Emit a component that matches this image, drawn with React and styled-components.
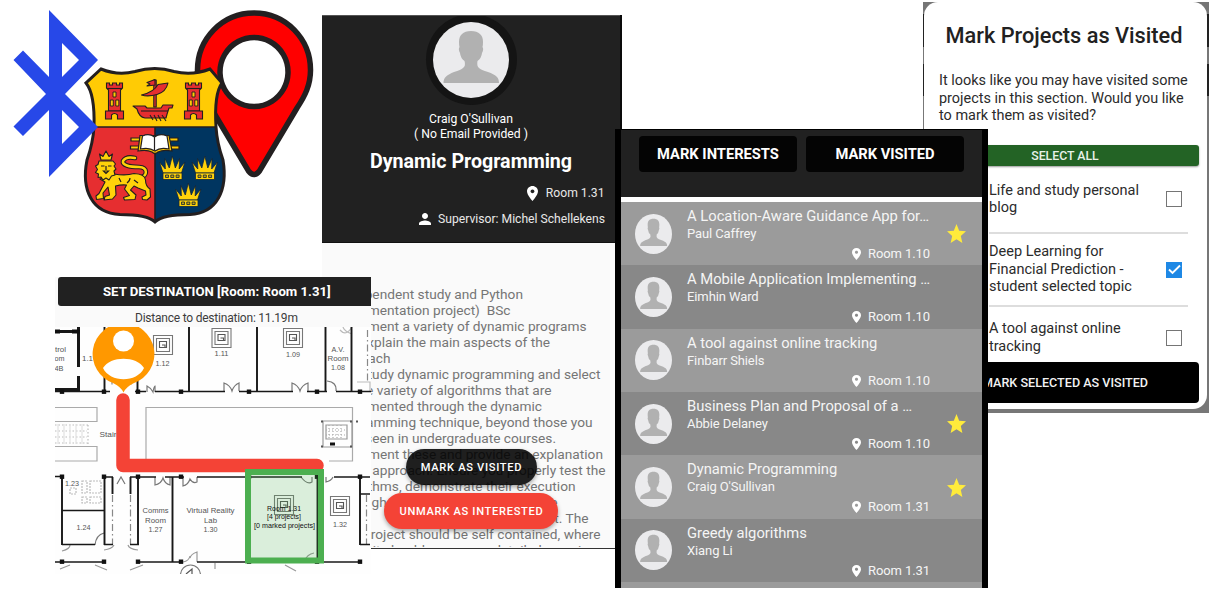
import React from "react";
import styled, { createGlobalStyle } from "styled-components";

const Global = createGlobalStyle`
  * { box-sizing: border-box; }
  body { margin: 0; background: #fff; font-family: Roboto, "Liberation Sans", sans-serif; }
`;

const Canvas = styled.main`
  position: relative;
  width: 1229px;
  height: 600px;
  overflow: hidden;
  background: #fff;
`;

const Screen = styled.section`
  position: absolute;
  left: ${(p) => p.$x}px;
  top: ${(p) => p.$y}px;
  width: ${(p) => p.$w}px;
  height: ${(p) => p.$h}px;
  overflow: hidden;
  display: flex;
  flex-direction: column;
`;

const TextLine = styled.span`
  display: block;
  white-space: pre;
`;

/* ---------- logo ---------- */

const Logo = styled.svg`
  position: absolute;
  left: 0;
  top: 0;
`;

const SHIELD =
  "M101 69 Q118 76 135 71.5 Q155 65.5 174 71.5 Q192 76 210 69 L222 83 Q214 94 216 127 Q217 143 223 160 C228 190 217 213 190 214.5 C172 214.5 160 217 155 222 C150 217 138 214.5 120 214.5 C92 213 81 190 87 160 Q93 143 94 127 Q95 94 86 83 Z";

const Tower = ({ x }) => (
  <g transform={`translate(${x} 82)`} fill="#e62e30" stroke="#231f20" strokeWidth="1.1">
    <path d="M1 1 h3 v2 h3 v-2 h4 v2 h3 v-2 h3 v5 l-2 2 v21 h-12 v-21 l-2 -2 z" />
    <path d="M0 29 h18 v8 h-6 v-4 q-3 -3 -6 0 v4 h-6 z" />
    <path d="M1.5 6.5 h15" />
    <g fill="#ffcb05" strokeWidth="0.9">
      <path d="M7.5 10 h3 v5 h-3 z M4.8 18 h3 v6 h-3 z M10.3 18 h3 v6 h-3 z" />
    </g>
  </g>
);

const Crown = ({ x, y }) => (
  <g transform={`translate(${x} ${y})`} fill="#ffd20a" stroke="#10233a" strokeWidth="0.8">
    <path d="M3.5 17 L0 6 L5.8 13 L5.5 2.5 L9.8 12 L12.8 0 L15.8 12 L20 2.5 L19.7 13 L25.5 6 L22 17 Z" />
    <path d="M3.5 17 h19 v6.5 h-19 z" />
    <path d="M6 19 h3 v2.5 h-3 z M11.3 19 h3 v2.5 h-3 z M16.6 19 h3 v2.5 h-3 z" fill="#c9a30c" />
  </g>
);

const TAIL = "M140 177.5 C148 176 148 167.500 139 167 C129 167 122 165 123 161 Q126 156 135 158";

const BrandLogo = () => (
  <Logo width="320" height="240" viewBox="0 0 320 240">
    <path
      d="M254 13 C286 13 310.5 39 310.5 70 C310.5 85 305 96 297 108 L259.5 171 Q254 178 248.5 171 L211 108 C203 96 197.5 85 197.5 70 C197.5 39 222 13 254 13 Z M254 37.5 a34 34.5 0 1 0 .01 0 Z"
      fill="#f00"
      fillRule="evenodd"
      stroke="#231f20"
      strokeWidth="5.5"
    />
    <clipPath id="shield"><path d={SHIELD} /></clipPath>
    <g clipPath="url(#shield)">
      <path d="M80 60 h150 v67 h-150 z" fill="#ffcb05" />
      <path d="M80 127 h75 v100 h-75 z" fill="#e62e30" />
      <path d="M155 127 h75 v100 h-75 z" fill="#003560" />
      <path d="M80 127 h150 M155 127 v97" stroke="#231f20" strokeWidth="1.6" fill="none" />
    </g>
    <path d={SHIELD} fill="none" stroke="#231f20" strokeWidth="3" strokeLinejoin="miter" />
    <Tower x={105.5} />
    <Tower x={184.5} />
    <g stroke="#231f20" strokeWidth="1.1" fill="#e62e30" strokeLinejoin="round">
      <path d="M153.8 80 h2.4 v27 h-2.4 z" />
      <path d="M155 79.5 l-8 3 l3 1.5 l-3 2 l8 -1 z" />
      <path d="M141.5 95 Q154 92 158 84.5 L168 83 Q166 92 157 94.5 Q148 97 141.500 95 Z" />
      <path d="M133 106 h12 l2 2 h14 l2 -3 h10 l-1 3 h-3 q-2 6 -3 10 h-21 q-6 -1 -8 -9 z" />
      <path d="M141 111 h27" fill="none" />
      <path d="M150 115 l3 5 M154 115 l3 6 M158 115 l3 6 M162 115 l4 6" fill="none" />
    </g>
    <g stroke="#231f20" strokeWidth="1.2">
      <path d="M131 138 h10 v3 h-10 z M130.5 146 h10 v3 h-10 z M169 138 h9 v3 h-9 z M170 146 h9 v3 h-9 z" fill="#ffcb05" />
      <path d="M140 135.5 L138 151 Q147 149.5 152 152 Q155 155 158 152 Q163 149.5 172 151 L169 135.5 Z" fill="#ffcb05" />
      <path d="M142.5 136 Q149 133 154.5 137 Q160 133 167 136 L169 149 Q160 147 155 151 Q149 147 140.5 149 Z" fill="#fff" />
      <path d="M154.5 137 V150" fill="none" />
    </g>
    <path d={TAIL} fill="none" stroke="#231f20" strokeWidth="4.6" strokeLinecap="round" />
    <path d={TAIL} fill="none" stroke="#ffd20a" strokeWidth="2.5" strokeLinecap="round" />
    <g fill="#ffd20a" stroke="#231f20" strokeWidth="1.1" strokeLinejoin="round">
      <path d="M114 174 Q126 176 134 173.500 Q145 174 145.500 180 Q145.500 186 150 189 L150.500 197 L147 200 L142.500 199.500 L142 197 L146 195 L145.500 191 L138 188 L134 186 L130.500 190 L136 195 L135 199.500 L124.500 200 L123.500 197.500 L129.500 195.500 L124.500 189 L126.500 185 Q121 184.500 115.500 186 L116 195 L112.500 199 L104 200 L105 196.500 L109.500 195 L108 187 L103 193 L103.500 198.500 L96.500 199.500 L96 196 L99 193.500 L105 182 L100 179 Z" />
      <path d="M99 161 L113 161 L115.500 164 L114 166 L116 169 L114 171 L115 175 L111.500 176 L109 180 L106 178 L103 180 L101 177 L98 177.500 L98.500 174 L95.500 172.500 L97.500 169.500 L95.500 166 L98 164.500 Z" />
      <path d="M101 160 L99.500 154 L103 156.500 L106 151 L109 156.500 L112.500 154 L111 160 Z" />
    </g>
    <path d="M101 166 h3.500 M108 166 h3.500 M103.500 171 h5 l-2.500 2.500 z M106 166 v4 M119 178 l2 4 M127 183 q3 -2 3 -5 M134 180 l4 3" fill="none" stroke="#231f20" strokeWidth="1.2" />
    <Crown x={159.5} y={156} />
    <Crown x={192} y={156} />
    <Crown x={175.5} y={183} />
    <path
      d="M49 10 L98 60 L65 94 L98 127 L49 177 V110 L23 136 L13.5 126.5 L46 94 L13.5 60 L23 50.5 L49 77 Z M62 43 V77 L79 60 Z M62 110 V144 L79 127 Z"
      fill="#2748e8"
      fillRule="evenodd"
    />
  </Logo>
);

/* ---------- shared glyphs ---------- */

const Glyph = styled.svg`
  display: block;
  flex: none;
`;

const Person = ({ w, h }) => (
  <Glyph width={w} height={h} viewBox="0 0 76 76" preserveAspectRatio="none">
    <circle cx="38" cy="38" r="38" fill="#ebebed" />
    <path
      d="M38 9 C46 9 50 13 50 20 Q50 23 49.5 25 Q51 27 49 31 Q48.5 36 44.5 39 Q43.5 44 46 46 Q48 48 55 50 C63 53 66 55 66 61 L10.5 61 C10.5 55 14 53 21 50 Q28 48 30 46 Q33 44 31.5 39 Q27.5 36 27 31 Q25 27 26.5 25 Q26 23 26 20 C26 13 30 9 38 9 Z"
      fill="#b1b1b1"
    />
  </Glyph>
);

const Pin = ({ w, h }) => (
  <Glyph width={w} height={h} viewBox="5 2 14 20" preserveAspectRatio="none">
    <path
      fill="#fff"
      d="M12 2C8.130 2 5 5.130 5 9c0 5.250 7 13 7 13s7-7.750 7-13c0-3.870-3.130-7-7-7zm0 9.500c-1.380 0-2.500-1.120-2.500-2.500s1.120-2.500 2.500-2.500 2.500 1.120 2.500 2.500-1.120 2.500-2.500 2.500z"
    />
  </Glyph>
);

/* ---------- project details ---------- */

const ProfileScreen = styled(Screen)`
  background: #fafafa;
  border-right: 2px solid #0a0a0a;
  border-bottom: 1px solid #333;
`;

const ProfileHeader = styled.header`
  height: 228px;
  flex: none;
  background: #212121;
  border-top: 1px solid #555;
  border-bottom: 1px solid #111;
  color: #fff;
  display: flex;
  flex-direction: column;
  align-items: center;
`;

const AvatarRing = styled.div`
  width: 91px;
  height: 91px;
  margin-top: -2px;
  border-radius: 50%;
  background: #141414;
  display: grid;
  place-items: center;
`;

const HeaderArea = styled.div`
  width: 100%;
  height: 93px;
  overflow: hidden;
  display: flex;
  justify-content: center;
`;

const Contact = styled.div`
  font-size: 12.2px;
  line-height: 15px;
  text-align: center;
  margin-top: 3px;
`;

const ProfileTitle = styled.h2`
  margin: 8px 0 0;
  font-size: 19.65px;
  line-height: 24px;
  font-weight: 700;
`;

const Meta = styled.div`
  align-self: flex-end;
  display: flex;
  align-items: center;
  gap: ${(p) => p.$gap}px;
  height: 26px;
  margin-top: ${(p) => p.$top || 0}px;
  padding-right: ${(p) => p.$right}px;
  font-size: 12.150px;
  color: #e8e8e8;
`;

const Description = styled.div`
  padding-top: 43px;
  height: 304px;
  overflow: hidden;
  font-size: 13.7px;
  line-height: 16px;
  color: #757575;
`;

const Line = styled.div`
  white-space: pre;
  text-align: right;
  padding-right: ${(p) => 620 - p.$end}px;
`;

const Actions = styled.div`
  position: absolute;
  left: 62px;
  top: 434px;
  display: flex;
  flex-direction: column;
  align-items: center;
  gap: 8px;
`;

const Pill = styled.button`
  width: ${(p) => p.$w}px;
  height: 36px;
  border: 0;
  border-radius: 18px;
  padding: 0 0 0 1px;
  background: ${(p) => p.$bg};
  color: #fff;
  font: 500 11.1px Roboto, sans-serif;
  letter-spacing: 0.7px;
  box-shadow: 0 2px 4px rgba(0, 0, 0, 0.35);
`;

const description = [
  ["pendent study and Python", 523],
  ["mentation project)  BSc", 510.5],
  ["ment a variety of dynamic programs", 586.5],
  ["xplain the main aspects of the", 550],
  ["ach", 390.5],
  ["tudy dynamic programming and select", 600.5],
  ["e variety of algorithms that are", 551.5],
  ["mented through the dynamic", 542],
  ["amming technique, beyond those you", 592.5],
  ["seen in undergraduate courses.", 556],
  ["ment these and provide an explanation", 603],
  ["approach. Ensure you properly test the", 605.5],
  ["thms, demonstrate their execution", 575.5],
  ["gh the results and evaluate the", 557.5],
  ["edge of the subject project. The", 588.5],
  ["project should be self contained, where", 600.5],
  ["it should serve as a detailed overview", 599],
];

const Profile = () => (
  <ProfileScreen $x={322} $y={15} $w={300} $h={534}>
    <ProfileHeader>
      <HeaderArea>
        <AvatarRing><Person w={76} h={76} /></AvatarRing>
      </HeaderArea>
      <Contact>
        <TextLine>Craig O'Sullivan</TextLine>
        <TextLine>( No Email Provided )</TextLine>
      </Contact>
      <ProfileTitle><TextLine>Dynamic Programming</TextLine></ProfileTitle>
      <Meta $gap={8} $right={15.5} $top={6}>
        <Pin w={11} h={15} />
        <TextLine>Room 1.31</TextLine>
      </Meta>
      <Meta $gap={7} $right={15}>
        <Glyph width="12" height="12" viewBox="4 4 16 16">
          <path fill="#fff" d="M12 12c2.210 0 4-1.790 4-4s-1.790-4-4-4-4 1.790-4 4 1.790 4 4 4zm0 2c-2.670 0-8 1.340-8 4v2h16v-2c0-2.660-5.330-4-8-4z" />
        </Glyph>
        <TextLine>Supervisor: Michel Schellekens</TextLine>
      </Meta>
    </ProfileHeader>
    <Description>
      {description.map(([text, end]) => <Line key={text} $end={end}>{text}</Line>)}
    </Description>
    <Actions>
      <Pill $w={131} $bg="rgba(0,0,0,0.88)">MARK AS VISITED</Pill>
      <Pill $w={174} $bg="#f44336">UNMARK AS INTERESTED</Pill>
    </Actions>
  </ProfileScreen>
);

/* ---------- map ---------- */

const MapScreen = styled(Screen)`
  background: #fafafa;
`;

const DestinationButton = styled.button`
  height: 29px;
  margin: 0 0 0 3px;
  padding: 0;
  border: 0;
  border-radius: 3px 0 0 3px;
  background: #212121;
  color: #fff;
  font: 700 13.2px Roboto, sans-serif;
  display: flex;
  align-items: center;
  padding-left: 45px;
`;

const Distance = styled.div`
  height: 21px;
  padding: 4px 0 0 80px;
  font-size: 12px;
  letter-spacing: -0.22px;
  line-height: 16px;
  color: #3c3c3c;
`;

const Plan = styled.svg`
  display: block;
  background: #fefefe;
  font-family: "Liberation Sans", sans-serif;
`;

const QrSquare = ({ x, y }) => (
  <g fill="none" stroke="#777" strokeWidth="1.1" transform={`translate(${x} ${y})`}>
    <path d="M-9.5 -9.5 h19 v19 h-19 z" />
    <path d="M-6.5 -6.5 h13 v13 h-13 z" />
    <path d="M-3.5 -3.5 h7 v6 h-7 z M-1 0 h3 v3" stroke="#555" />
  </g>
);

const Label = ({ x, y, w, children, fill = "#555", size = 8 }) => (
  <text x={x - w / 2} y={y + 2.9} fontSize={size} textLength={w} lengthAdjust="spacingAndGlyphs" fill={fill}>
    {children}
  </text>
);

const columns = [62, 104, 138, 181, 249, 317, 360];

const FloorPlan = () => (
  <Plan width="316" height="247" viewBox="55 327 316 247">
    <g fill="none" stroke="#aaa" strokeWidth="1.2">
      <path d="M55 407.5 H97 V421.5 H55 M55 446.5 H97 V461 H55" />
      <path d="M146 461 V407.5 H352.5 V461 H329" />
      <path d="M55 425 H88 M55 431 H87 M55 437 H87 M55 443 H88 M88 425 V444" strokeDasharray="1.5 2" stroke="#bbb" />
      <path d="M58 424 V444 M64 424 V444 M70 424 V444 M76 424 V444 M82 424 V444" stroke="#e2e2e2" />
      <path d="M323 421 H352 V447 H323 Z M326 425 H347 V439 H326 Z" stroke="#999" />
      <path d="M329 425 V439 M333 425 V439 M337 425 V439 M341 425 V439 M326 430 H347 M326 435 H347" strokeDasharray="1 2" />
      <path d="M112.5 495 V544 M130.5 495 V544 M366.5 495 V544 M367.5 330 V383 M131 334 V386 M112 334 V386" strokeDasharray="7 3 1.5 3" stroke="#888" />
      <path d="M147 392 V386 Q151 388 153 392 Q154 386 155 386 V392 M224 391 V383 Q230 385 232 391 Q234 385 239 383 V391 M292 391 V383 Q298 385 300 391 Q302 385 308 383 V391 M327 381 Q337 382 336 391" stroke="#777" />
      <path d="M155 477 V485 Q161 484 163 478 Q165 484 170 485 V477 M183 477 V486 Q188 485 190 479 Q193 484 197 482 V477 M301 477 Q307 485 312 482 V477 M326 477 V482 Q331 481 333 477 M104 533 Q96 535 95 545 M117 484 L121 477 L125 484" stroke="#777" />
      <path d="M183 562 Q189 561 190 556 M197 562 V552 Q191 554 190 558 M62 551 Q70 549 70 545 M104 550 Q112 549 114 545 M138 550 Q129 549 128 545 M304 562 Q307 554 314 553 M215 563 V569 M60 569 L70 565 M95 565 L107 570 M130 570 L143 565 M285 565 L296 571" stroke="#999" />
      <path d="M357 382 H370 V391 M340 330 Q346 337 352 327 M352 334 Q344 331 343 327" stroke="#bbb" />
      <circle cx="190.5" cy="575" r="10" stroke="#777" />
      <path d="M186 574 L192 569 V574" stroke="#555" />
      <g stroke="#bbb" strokeDasharray="2 1">
        <rect x="82" y="481" width="5" height="12" /><rect x="90" y="481" width="11" height="12" />
        <rect x="70" y="488" width="6" height="6" /><rect x="82" y="497" width="5" height="6" /><rect x="90" y="497" width="11" height="6" />
      </g>
    </g>
    <g fill="none" stroke="#181818">
      <path d="M55 331.5 H78 M78.5 327 V367 M78.5 376 V391 M55 389.5 H80" strokeWidth="3" />
      <path d="M55 391.5 H110 M135 391.5 H146 M155 391.5 H225 M239 391.5 H293 M307 391.5 H327 M336 391.5 H371" strokeWidth="1.6" />
      <path d="M104.5 327 V391 M137.5 327 V391 M189 327 V391 M257 327 V391 M325.5 327 V391 M351.5 327 V391" strokeWidth="1.9" />
      <path d="M55 476.5 H62 M104 477 H113 M130 477 H156 M165 477 H184 M197 477 H302 M334 477 H370" strokeWidth="1.6" />
      <path d="M62 477 V545 M104.5 477 V545 M112.5 477 V494 M130.5 477 V494 M138 477 V545 M172.5 477 V562 M248 477 V562 M317.5 477 V562 M360 477 V545" strokeWidth="1.9" />
      <path d="M62 510.5 H104 M62 544.5 H95 M104 544.5 H113 M130 544.5 H139 M360 494 H370 M360 544.5 H370" strokeWidth="1.7" />
      <path d="M55 562 H104 M138 562 H182 M197 562 H360" strokeWidth="1.7" />
    </g>
    <g fill="#111">
      {columns.map((x) => (
        <g key={x}>
          <rect x={x - 2.2} y="389.5" width="4.4" height="4.4" />
          <rect x={x - 2.2} y="474.5" width="4.4" height="4.4" />
          <rect x={x - 2.2} y="559.5" width="4.4" height="4.4" />
        </g>
      ))}
      <path d="M55 329.5 h5 v4 h-5 z M72 329.5 h8 v4 h-8 z M330 442.5 h5 v3 h-5 z" />
      <path d="M321 420.5 h2 v2 h-2 z M350 420.5 h2 v2 h-2 z M356 420.5 h2 v2 h-2 z M321 445.5 h2 v2 h-2 z M350 445.5 h2 v2 h-2 z" fill="#555" />
    </g>
    <QrSquare x={163} y={345} />
    <QrSquare x={221.5} y={338} />
    <QrSquare x={293} y={338} />
    <QrSquare x={284} y={505} />
    <QrSquare x={340} y={506} />
    <Label x={60.5} y={349} w={11}>trol</Label>
    <Label x={59.5} y={358} w={10}>om</Label>
    <Label x={59} y={368} w={9}>4B</Label>
    <Label x={87.5} y={358} w={11}>1.1</Label>
    <Label x={162.5} y={363} w={14}>1.12</Label>
    <Label x={221.5} y={353.5} w={14}>1.11</Label>
    <Label x={293} y={354} w={14}>1.09</Label>
    <Label x={338} y={349} w={13}>A.V.</Label>
    <Label x={338} y={358} w={21}>Room</Label>
    <Label x={338} y={367.5} w={14}>1.08</Label>
    <Label x={108} y={434.5} w={17}>Stair</Label>
    <Label x={72} y={483} w={14}>1.23</Label>
    <Label x={83.5} y={527.5} w={14}>1.24</Label>
    <Label x={155.5} y={510.5} w={26}>Comms</Label>
    <Label x={155.5} y={520} w={21}>Room</Label>
    <Label x={155.5} y={529} w={14}>1.27</Label>
    <Label x={210.5} y={510.5} w={48}>Virtual Reality</Label>
    <Label x={210.5} y={520} w={13}>Lab</Label>
    <Label x={210.5} y={529} w={14}>1.30</Label>
    <Label x={340} y={524.5} w={14}>1.32</Label>
    <path d="M123 400 V465.5 H317" fill="none" stroke="#f44336" strokeWidth="13.5" strokeLinecap="round" strokeLinejoin="round" />
    <rect x="248" y="472" width="73" height="88.5" fill="#4caf50" fillOpacity="0.2" stroke="#4caf50" strokeWidth="6" />
    <Label x={284} y={508.5} w={34} fill="#111" size={7.3}>Room 1.31</Label>
    <Label x={284} y={516.5} w={34} fill="#111" size={7.3}>[4 projects]</Label>
    <Label x={284.5} y={525} w={61} fill="#111" size={7.3}>[0 marked projects]</Label>
    <path d="M123.5 323 a31 31 0 0 1 10 60.3 Q126 387 123.5 392.5 Q121 387 113.5 383.3 A31 31 0 0 1 123.500 323 Z" fill="#ff9800" />
    <circle cx="123.5" cy="341" r="10.5" fill="#fff" />
    <path d="M103 368 C110 355.5 137 355.5 144 368 C137 383 110 383 103 368 Z" fill="#fff" />
  </Plan>
);

const Navigation = () => (
  <MapScreen $x={55} $y={277} $w={316} $h={297}>
    <DestinationButton><TextLine>SET DESTINATION [Room: Room 1.31]</TextLine></DestinationButton>
    <Distance><TextLine>Distance to destination: 11.19m</TextLine></Distance>
    <FloorPlan />
  </MapScreen>
);

/* ---------- project list ---------- */

const ListScreen = styled(Screen)`
  border: solid #000;
  border-width: 1px 6px 0;
  background: #9b9b9b;
`;

const ListHeader = styled.header`
  flex: none;
  height: 72px;
  padding: 6px 18px 0 18px;
  background: #212121;
  border-bottom: 5px solid #fff;
  display: flex;
  gap: 9px;
`;

const TopButton = styled.button`
  flex: 1;
  height: 36px;
  padding: 0;
  border: 0;
  border-radius: 4px;
  background: #040404;
  color: #fff;
  font: 700 14.7px Roboto, sans-serif;
  display: grid;
  place-items: center;
`;

const Row = styled.article`
  flex: none;
  height: 63.35px;
  padding: 0 16px 0 14px;
  background: ${(p) => (p.$alt ? "#888" : "#9b9b9b")};
  color: #f5f5f5;
  display: flex;
  align-items: center;
`;

const RowText = styled.div`
  width: 243px;
  height: 100%;
  margin: 0 17px 0 15px;
  padding-top: 5px;
`;

const RowTitle = styled.div`
  font-size: 14.75px;
  line-height: 19px;
`;

const RowName = styled.div`
  font-size: 13px;
  letter-spacing: -0.1px;
  line-height: 15px;
`;

const RowRoom = styled.div`
  display: flex;
  align-items: center;
  justify-content: flex-end;
  gap: 7px;
  margin-top: 4px;
  font-size: 13px;
  letter-spacing: -0.1px;
  line-height: 18px;
`;

const projects = [
  { title: "A Location-Aware Guidance App for…", name: "Paul Caffrey", room: "Room 1.10", star: true },
  { title: "A Mobile Application Implementing …", name: "Eimhin Ward", room: "Room 1.10" },
  { title: "A tool against online tracking", name: "Finbarr Shiels", room: "Room 1.10" },
  { title: "Business Plan and Proposal of a …", name: "Abbie Delaney", room: "Room 1.10", star: true },
  { title: "Dynamic Programming", name: "Craig O'Sullivan", room: "Room 1.31", star: true },
  { title: "Greedy algorithms", name: "Xiang Li", room: "Room 1.31" },
];

const ProjectList = () => (
  <ListScreen $x={615} $y={129} $w={373} $h={459}>
    <ListHeader>
      <TopButton>MARK INTERESTS</TopButton>
      <TopButton>MARK VISITED</TopButton>
    </ListHeader>
    {projects.map((p, i) => (
      <Row key={p.title} $alt={i % 2 === 1}>
        <Person w={37} h={40} />
        <RowText>
          <RowTitle><TextLine>{p.title}</TextLine></RowTitle>
          <RowName><TextLine>{p.name}</TextLine></RowName>
          <RowRoom><Pin w={9} h={12} /><TextLine>{p.room}</TextLine></RowRoom>
        </RowText>
        {p.star && (
          <Glyph width="19" height="19" viewBox="2 2 20 19" preserveAspectRatio="none">
            <path fill="#ffeb3b" d="M12 17.270L18.180 21l-1.640-7.030L22 9.240l-7.190-.610L12 2 9.190 8.630 2 9.240l5.460 4.730L5.820 21z" />
          </Glyph>
        )}
      </Row>
    ))}
  </ListScreen>
);

/* ---------- visited dialog ---------- */

const DialogScreen = styled(Screen)`
  background: linear-gradient(#757575 12px, #222 12px 45px, #777 45px 62px, #222 62px 94px, #777 94px);
  padding: 0 2px 4px 1px;
`;

const Card = styled.div`
  flex: 1;
  background: #fff;
  border-radius: 14px;
  padding: 20px 8px 0 7px;
  color: #2b2b2b;
  display: flex;
  flex-direction: column;
`;

const DialogTitle = styled.h2`
  margin: 0;
  padding-right: 2px;
  text-align: center;
  font-size: 21.75px;
  line-height: 28px;
  font-weight: 500;
  color: #212121;
`;

const Prompt = styled.p`
  margin: 22px 0 0 8px;
  font-size: 14.45px;
  line-height: 17.5px;
`;

const SelectAll = styled.button`
  flex: none;
  height: 21px;
  margin-top: 20.5px;
  padding: 0;
  border: 0;
  border-radius: 3px;
  background: #236325;
  color: #e9f2e9;
  font: 500 12.3px Roboto, sans-serif;
  box-shadow: 0 1px 2px rgba(0, 0, 0, 0.4);
`;

const Choice = styled.label`
  height: ${(p) => p.$h}px;
  margin: 0 11px 0 58px;
  border-bottom: ${(p) => (p.$last ? "0" : "2px solid #ddd")};
  display: flex;
  align-items: center;
  justify-content: space-between;
  padding: ${(p) => (p.$last ? 7 : 1)}px 6px 0 0;
  font-size: 14.5px;
  line-height: 17.5px;
`;

const Box = styled.span`
  width: 16px;
  height: 16px;
  border: 1.6px solid ${(p) => (p.$on ? "#1e88e5" : "#757575")};
  background: ${(p) => (p.$on ? "#1e88e5" : "#fff")};
  display: grid;
  place-items: center;
`;

const Submit = styled.button`
  flex: none;
  height: 41px;
  padding: 0;
  border: 0;
  border-radius: 4px;
  background: #000;
  color: #f2f2f2;
  font: 500 12.6px Roboto, sans-serif;
`;

const choices = [
  { h: 67.5, lines: ["Life and study personal", "blog"] },
  { h: 73, lines: ["Deep Learning for", "Financial Prediction -", "student selected topic"], on: true },
  { h: 55.5, lines: ["A tool against online", "tracking"], last: true },
];

const VisitedDialog = () => (
  <DialogScreen $x={923} $y={2} $w={286} $h={411}>
    <Card>
      <DialogTitle><TextLine>Mark Projects as Visited</TextLine></DialogTitle>
      <Prompt>
        <TextLine>It looks like you may have visited some</TextLine>
        <TextLine>projects in this section. Would you like</TextLine>
        <TextLine>to mark them as visited?</TextLine>
      </Prompt>
      <SelectAll>SELECT ALL</SelectAll>
      {choices.map((c) => (
        <Choice key={c.lines[0]} $h={c.h} $last={c.last}>
          <span>{c.lines.map((l) => <TextLine key={l}>{l}</TextLine>)}</span>
          <Box $on={c.on}>
            {c.on && (
              <Glyph width="13" height="11" viewBox="0 0 13 11">
                <path d="M1 5.5 L4.5 9 L12 1.5" fill="none" stroke="#fff" strokeWidth="1.9" />
              </Glyph>
            )}
          </Box>
        </Choice>
      ))}
      <Submit>MARK SELECTED AS VISITED</Submit>
    </Card>
  </DialogScreen>
);

export default function App() {
  return (
    <Canvas>
      <Global />
      <BrandLogo />
      <VisitedDialog />
      <Profile />
      <ProjectList />
      <Navigation />
    </Canvas>
  );
}
